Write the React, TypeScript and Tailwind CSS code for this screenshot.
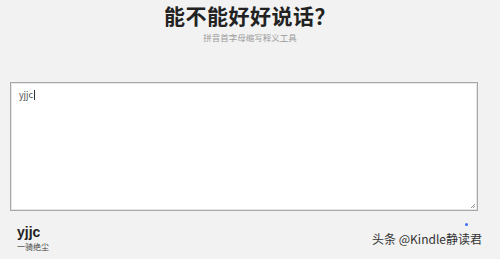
export default function App() {
  return (
    <div
      className="relative flex h-[259px] w-[500px] flex-col items-center overflow-hidden bg-[#f2f2f2]"
      style={{ fontFamily: '"Noto Sans CJK SC", "Liberation Sans", sans-serif' }}
    >
      <h1 className="mt-[1px] text-[21px] font-bold leading-[28px] tracking-[0.5px] text-[#222]">
        能不能好好说话？
      </h1>
      <p className="mt-[3px] text-[8.5px] leading-[10px] text-[#9a9a9a]">拼音首字母缩写释义工具</p>

      <div className="mt-[40px] flex w-full px-[10px] pr-[22px]">
        <div className="relative h-[129px] w-full border border-[#a8a8a8] bg-white shadow-[inset_0_0_0_1px_#e6e6e6]">
          <div className="absolute left-[8px] top-[6px] flex items-center text-[9px] leading-[12px] text-[#555]">
            yjjc<span className="ml-[1px] h-[10px] w-px bg-[#333]" />
          </div>
          <svg className="absolute bottom-[1px] right-[1px]" width="6" height="6" viewBox="0 0 6 6">
            <path d="M5 1 L1 5 M5 3 L3 5" stroke="#999" strokeWidth="1" />
          </svg>
        </div>
      </div>

      <div className="mt-[13px] flex w-full items-start justify-between pl-[17px] pr-[18px]">
        <div className="flex flex-col">
          <span
            className="text-[14px] font-bold leading-[16px] text-[#222]"
            style={{ fontFamily: '"Liberation Sans", sans-serif' }}
          >
            yjjc
          </span>
          <span className="mt-[2px] text-[8px] leading-[10px] text-[#444]">一骑绝尘</span>
        </div>
        <div className="relative mt-[8px] text-[12px] leading-[14px] text-[#333]">
          <span className="absolute -top-[9px] right-[14px] h-[3px] w-[3px] rounded-full bg-[#3b6cf5]" />
          头条 @Kindle静读君
        </div>
      </div>
    </div>
  );
}
